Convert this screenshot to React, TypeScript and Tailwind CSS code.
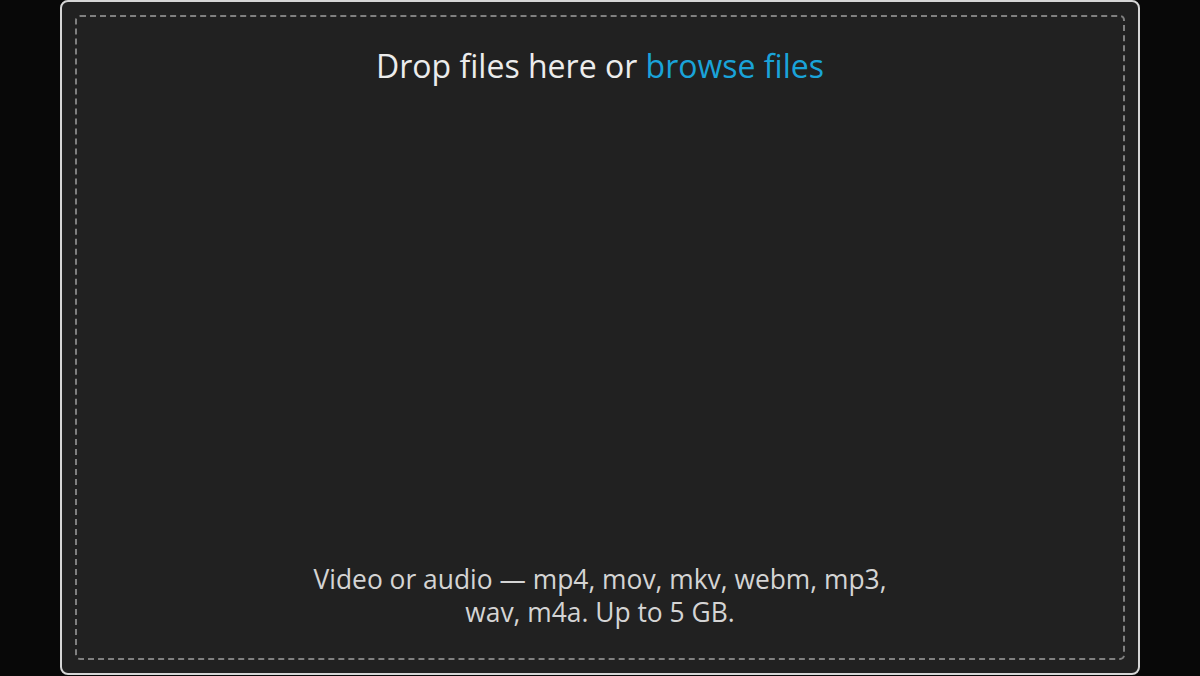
import React from "react";

export default function App() {
  return (
    <div className="w-[1200px] h-[676px] bg-[#080808] flex justify-center overflow-hidden" style={{ fontFamily: '"Open Sans", "Noto Sans", sans-serif' }}>
      <div className="w-[1080px] h-[675px] mt-0 rounded-[8px] border-2 border-[#d6d6d6] bg-[#212121] p-[13px]">
        <div className="h-full rounded-[5px] border-2 border-dashed border-[#808080] flex flex-col items-center justify-between pt-[29px] pb-[29px]">
          <div className="text-[32px] leading-[40px] text-[#ececec]">
            Drop files here or <span className="text-[#1aa3d9]">browse files</span>
          </div>
          <div className="text-[26.4px] leading-[33px] text-[#d4d4d4] text-center">
            Video or audio — mp4, mov, mkv, webm, mp3,
            <br />
            wav, m4a. Up to 5 GB.
          </div>
        </div>
      </div>
    </div>
  );
}
